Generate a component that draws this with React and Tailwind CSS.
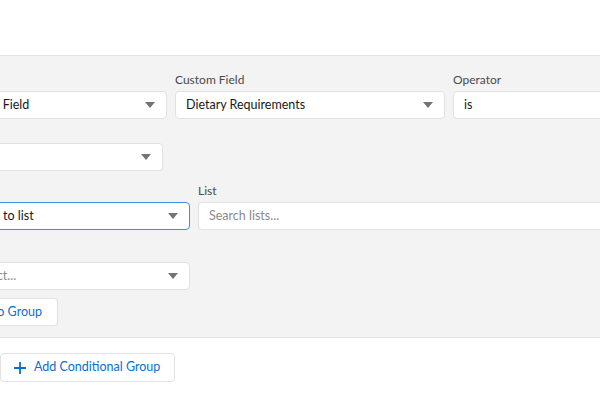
import React from "react";

const Arrow = () => (
    <svg width="10" height="6" viewBox="0 0 10 6" className="shrink-0">
        <path d="M0 0 L10 0 L5 6 Z" fill="#747474" />
    </svg>
);

const Select = ({ value, placeholder, focused, className }) => (
    <div
        className={`h-[28px] shrink-0 flex items-center justify-between bg-white rounded-[4px] border pl-[10px] pr-[11px] ${
            focused ? "border-[#3b8ee6]" : "border-[#e1e1e1]"
        } ${className}`}
    >
        <span
            className={`text-[12.5px] whitespace-nowrap ${
                value ? "text-[#181818]" : "text-[#8a8a8a]"
            }`}
        >
            {value || placeholder}
        </span>
        <Arrow />
    </div>
);

const Input = ({ value, placeholder, className }) => (
    <div
        className={`h-[28px] shrink-0 flex items-center bg-white rounded-[4px] border border-[#e1e1e1] pl-[10px] ${className}`}
    >
        <span
            className={`text-[12.5px] whitespace-nowrap ${
                value ? "text-[#181818]" : "text-[#8a8a8a]"
            }`}
        >
            {value || placeholder}
        </span>
    </div>
);

const Label = ({ children }) => (
    <div className="h-[20px] text-[12px] leading-[18px] text-[#4a4a4a]">
        {children}
    </div>
);

export default function App() {
    return (
        <div className="w-[600px] h-[400px] overflow-hidden bg-white font-['Lato',sans-serif]">
            <div className="h-[55px]" />
            <div className="border-y border-[#e3e3e3] bg-[#f3f3f3] pt-[15px] pb-[11px]">
                {/* row 1 */}
                <div className="flex items-end gap-2 -ml-[54px] w-[900px]">
                    <Select value="Custom Field" className="w-[221px]" />
                    <div className="flex flex-col">
                        <Label>Custom Field</Label>
                        <Select value="Dietary Requirements" className="w-[270px]" />
                    </div>
                    <div className="flex flex-col">
                        <Label>Operator</Label>
                        <Input value="is" className="w-[220px]" />
                    </div>
                </div>
                {/* row 2 */}
                <div className="flex mt-6 -ml-[60px]">
                    <Select className="w-[223px]" />
                </div>
                {/* row 3 */}
                <div className="flex items-end gap-2 mt-[11px] -ml-[47px] w-[900px]">
                    <Select value="Added to list" focused className="w-[237px]" />
                    <div className="flex flex-col">
                        <Label>List</Label>
                        <Input placeholder="Search lists..." className="w-[450px]" />
                    </div>
                </div>
                {/* row 4 */}
                <div className="flex mt-8 -ml-[37px]">
                    <Select placeholder="Select..." className="w-[227px]" />
                </div>
                {/* row 5 */}
                <div className="flex mt-2 -ml-[60px]">
                    <button className="h-[28px] w-[118px] flex items-center justify-end pr-[15px] bg-white rounded-[4px] border border-[#e1e1e1] text-[12.5px] text-[#0b6fd0] whitespace-nowrap">
                        Add to Group
                    </button>
                </div>
            </div>
            <div className="pt-[15px]">
                <button className="h-[29px] flex items-center gap-2 pl-[13px] pr-[14px] bg-white rounded-[4px] border border-[#e1e1e1] text-[12.5px] text-[#0b6fd0] whitespace-nowrap">
                    <svg width="12" height="12" viewBox="0 0 12 12">
                        <path d="M6 0 V12 M0 6 H12" stroke="#0b6fd0" strokeWidth="1.8" />
                    </svg>
                    Add Conditional Group
                </button>
            </div>
        </div>
    );
}
